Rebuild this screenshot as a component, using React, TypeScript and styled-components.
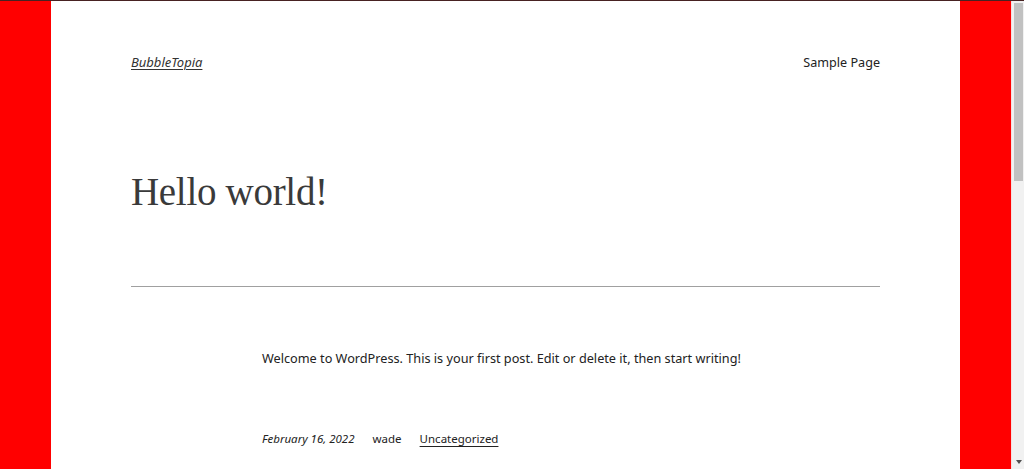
import React from "react";
import styled, { createGlobalStyle } from "styled-components";

const Global = createGlobalStyle`
  html, body { margin: 0; padding: 0; height: 100%; overflow: hidden; }
  body { background: #ff0000; }
  #root { height: 100%; }
`;

const Frame = styled.div`
  display: flex;
  height: 469px;
  width: 1024px;
  border-top: 1px solid rgba(40, 40, 40, 0.85);
  box-sizing: border-box;
`;

const Stage = styled.div`
  flex: 1;
  display: flex;
  justify-content: center;
  background: #ff0000;
`;

const Sheet = styled.div`
  width: 909px;
  background: #ffffff;
  padding: 0 80px;
  box-sizing: border-box;
  color: #2f2f2f;
  font-family: "Noto Sans", "Open Sans", sans-serif;
`;

const Header = styled.header`
  display: flex;
  justify-content: space-between;
  align-items: center;
  padding-top: 51px;
  height: 20px;
`;

const SiteTitle = styled.a`
  font-size: 13px;
  font-style: italic;
  color: #333;
  text-decoration: underline;
  text-underline-offset: 2px;
  text-decoration-thickness: 1px;
`;

const NavLink = styled.a`
  font-size: 12.6px;
  color: #222;
  text-decoration: none;
`;

const Title = styled.h1`
  margin: 95px 0 0;
  font-family: "Liberation Serif", "Times New Roman", serif;
  font-weight: 300;
  font-size: 39px;
  line-height: 50px;
  letter-spacing: -0.3px;
  color: #3a3a3a;
`;

const Rule = styled.hr`
  margin: 69px 0 0;
  border: 0;
  border-top: 1px solid #a0a0a0;
  height: 0;
`;

const Body = styled.div`
  margin-left: 131px;
`;

const Para = styled.p`
  margin: 61px 0 0;
  font-size: 12.7px;
  line-height: 20px;
  color: #222;
`;

const Meta = styled.div`
  display: flex;
  gap: 18px;
  margin-top: 61px;
  font-size: 11.5px;
  line-height: 20px;
  color: #222;
`;

const MetaDate = styled.span`
  font-style: italic;
`;

const MetaLink = styled.a`
  color: #222;
  text-decoration: underline;
  text-underline-offset: 3px;
`;

const ScrollTrack = styled.div`
  width: 13px;
  background: #f1f1f1;
  border-left: 1px solid #f6dede;
  box-sizing: border-box;
  display: flex;
  flex-direction: column;
  align-items: center;
  padding: 2px 0 4px 1px;
`;

const Thumb = styled.div`
  width: 9px;
  height: 178px;
  background: #c1c1c1;
`;

const Spacer = styled.div`
  flex: 1;
`;

const ArrowDown = styled.div`
  width: 0;
  height: 0;
  border-left: 3.5px solid transparent;
  border-right: 3.5px solid transparent;
  border-top: 4px solid #505050;
  margin-bottom: 1px;
`;

export default function App() {
  return (
    <>
      <Global />
      <Frame>
        <Stage>
          <Sheet>
            <Header>
              <SiteTitle>BubbleTopia</SiteTitle>
              <NavLink>Sample Page</NavLink>
            </Header>
            <Title>Hello world!</Title>
            <Rule />
            <Body>
              <Para>
                Welcome to WordPress. This is your first post. Edit or delete it, then start writing!
              </Para>
              <Meta>
                <MetaDate>February 16, 2022</MetaDate>
                <span>wade</span>
                <MetaLink>Uncategorized</MetaLink>
              </Meta>
            </Body>
          </Sheet>
        </Stage>
        <ScrollTrack>
          <Thumb />
          <Spacer />
          <ArrowDown />
        </ScrollTrack>
      </Frame>
    </>
  );
}
